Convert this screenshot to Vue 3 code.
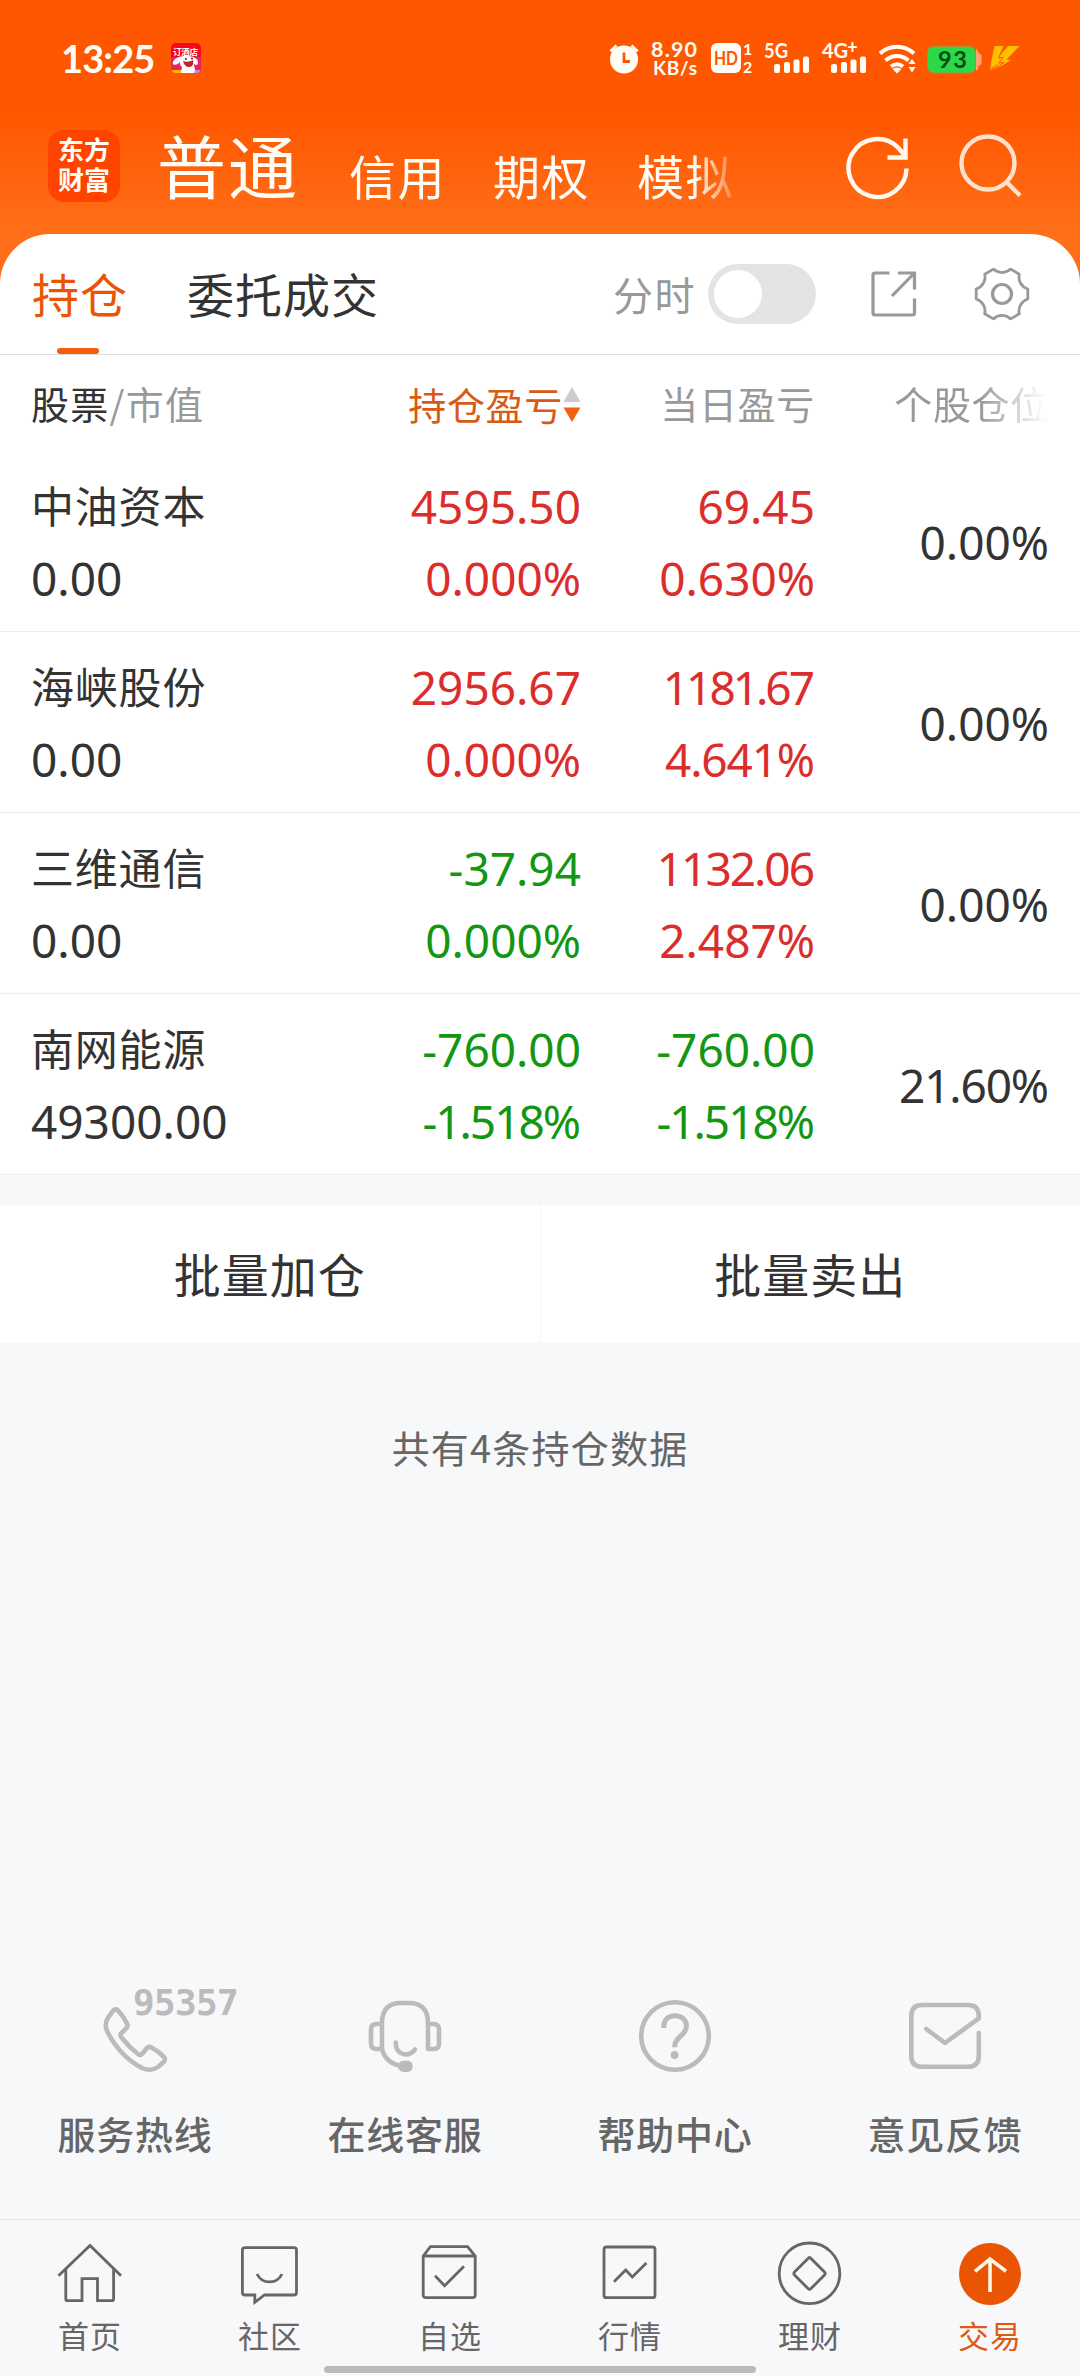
<template>
  <div class="page">
    <header class="top">
      <div class="status-bar">
        <span class="time">13:25</span>
        <svg class="notice" width="30" height="30" viewBox="0 0 30 30">
          <rect width="30" height="30" rx="5" fill="#f5061c" />
          <path d="M0 14h30v11a5 5 0 0 1-5 5H5a5 5 0 0 1-5-5z" fill="#e8265c" />
          <text x="2" y="12" font-size="8.500" font-weight="700" fill="#fff" textLength="25">订酒店</text>
          <path d="M8 14c4-1.500 13-1.500 16 1 3 1 4 5 2 7-2 0-3-1-3-2 0 4 1 6 2 10H10c0-3 1-4 1-6-2-1-2-3-2-5-2 2-5 4-7 2-1-3 3-6 6-7z" fill="#fff" />
          <path d="M12 18c3 1 7 1 10-1 1 5-1 7-4 7s-5-2-6-6z" fill="#c5202c" />
          <circle cx="15" cy="16" r="1" fill="#333" />
          <circle cx="21" cy="15.500" r="1" fill="#333" />
          <path d="M1 27h9v3H4c-2 0-3-1-3-3z" fill="#ffb400" />
          <path d="M24 27h5c0 2-1 3-3 3h-3z" fill="#c08be8" />
        </svg>
        <svg class="status-icons" width="430" height="56" viewBox="0 0 430 56">
          <g fill="#fffdf5" stroke="none">
            <circle cx="24" cy="29.500" r="14" />
            <path d="M10.500 21.500l6-6M37.500 21.500l-6-6" stroke="#fffdf5" stroke-width="3" />
            <path d="M24 22.500v9h6" fill="none" stroke="#ff5700" stroke-width="2.800" />
            <text font-weight="700"><tspan x="51" y="27" font-size="21.500" textLength="46">8.90</tspan><tspan x="53" y="45" font-size="19" textLength="44">KB/s</tspan></text>
            <rect x="111" y="13" width="30" height="30" rx="6" />
            <text x="114" y="35" font-size="19" font-weight="700" fill="#ff5700" textLength="24" lengthAdjust="spacingAndGlyphs">HD</text>
            <text font-size="16" font-weight="700"><tspan x="143" y="25">1</tspan><tspan x="143" y="42.500">2</tspan></text>
            <text x="164" y="28" font-size="20" font-weight="700" textLength="24" lengthAdjust="spacingAndGlyphs">5G</text>
            <text x="222" y="28" font-size="20" font-weight="700">4G<tspan dx="-1" dy="-4" font-size="18">+</tspan></text>
            <g v-for="x in [174, 231]" :key="x">
              <rect :x="x" y="34" width="6" height="9" rx="2" />
              <rect :x="x + 10" y="32" width="6" height="11" rx="2" />
              <rect :x="x + 19.5" y="29.500" width="6" height="13.500" rx="2" />
              <rect :x="x + 29" y="26.500" width="6" height="16.500" rx="2" />
            </g>
            <g fill="none" stroke="#fffdf5" stroke-width="4">
              <path d="M280 23.500c10-9 24-9 34 0" />
              <path d="M285.500 30.500c7-6 16-6 23 0" />
              <path d="M291 36.500c4-3 8-3 12 0" />
            </g>
            <path d="M292.500 39c3-2 6-2 9 0l-4.500 4.500zM308.500 34l3.500-5 3.500 5zM308.500 37l3.500 5.500 3.500-5.500z" />
          </g>
          <rect x="327.500" y="16.500" width="48" height="26.500" rx="6" fill="#2bd84a" stroke="#b58a35" />
          <path d="M376 19c2 1 2.500 3 2.500 4.500 3 0 3 2 3 3v6c0 1 0 3-3 3 0 2-.5 4-2.500 5.500z" fill="#ffa070" />
          <text x="338" y="38" font-size="23.500" font-weight="700" fill="#064d12" textLength="29">93</text>
          <path d="M394.500 16h9l-5 11 9.500-11h11.500l-13 13.500 4.500.5-8 5-12 5.500 10-9.500-9 7-2 2 1.500-10z" fill="#ffbe00" />
          <path d="M405 16l-6.500 12 4.500-.5-4 5.500 5-.5-12 7.500" fill="none" stroke="#ff5700" />
        </svg>
      </div>
      <div class="nav">
        <div class="logo">东方财富</div>
        <span class="nav-current">普通</span>
        <div class="nav-list">
          <span v-for="n in navs" :key="n">{{ n }}</span>
        </div>
        <svg class="refresh" width="64" height="66" viewBox="0 0 64 66" fill="none" stroke="#fff8ee" stroke-width="4.400">
          <path d="M60.500 34.500a29 29 0 1 1-8.500-21l7 8" />
          <path d="M59.500 4.500v19h-18" />
        </svg>
        <svg class="search" width="66" height="66" viewBox="0 0 66 66" fill="none" stroke="#ffe2cb" stroke-width="4.400">
          <circle cx="30" cy="31" r="26.500" />
          <path d="M48 49.500l14 14" />
        </svg>
      </div>
    </header>

    <main class="sheet">
      <div class="tabs">
        <span class="tab active">持仓</span>
        <span class="tab">委托成交</span>
        <span class="switch-label">分时</span>
        <span class="switch" @click="minute = !minute"><i :class="{ on: minute }"></i></span>
        <svg class="share" width="46" height="46" viewBox="0 0 46 46" fill="none" stroke="#999" stroke-width="3.200">
          <path d="M18.500 2H4Q2 2 2 4v38q0 2 2 2h37.500q2 0 2-2V27.500M27 2h16.500v16.500M43 2.500L21 25" />
        </svg>
        <svg class="gear" width="56" height="56" viewBox="-28 -28 56 56" fill="none" stroke="#999" stroke-width="2.800" stroke-linejoin="round">
          <path d="M25.800 5A12.500 12.500 0 0 0 17.300 19.800L8.600 24.900A12.500 12.500 0 0 0-8.600 24.900L-17.300 19.800A12.500 12.500 0 0 0-25.800 5V-5A12.500 12.500 0 0 0-17.300-19.800L-8.600-24.900A12.500 12.500 0 0 0 8.600-24.900L17.300-19.800A12.500 12.500 0 0 0 25.800-5Z" />
          <circle r="9.500" stroke-width="3.200" />
        </svg>
      </div>

      <div class="row head">
        <span class="col-name"><b>股票</b>/市值</span>
        <span class="sorted">持仓盈亏<svg width="18" height="36" viewBox="0 0 18 36">
          <path d="M9 0l8.500 15H.5z" fill="#ccc" />
          <path d="M9 35l8.500-14.500H.5z" fill="#f4600f" />
        </svg></span>
        <span>当日盈亏</span>
        <span class="fading">个股仓位</span>
      </div>

      <div v-for="s in stocks" :key="s.name" class="row stock">
        <div class="col-name">
          <p class="name">{{ s.name }}</p>
          <p>{{ s.value }}</p>
        </div>
        <div :class="s.total[0].startsWith('-') ? 'down' : 'up'">
          <p v-for="t in s.total" :key="t" :style="tracking(t)">{{ t }}</p>
        </div>
        <div :class="s.today[0].startsWith('-') ? 'down' : 'up'">
          <p v-for="t in s.today" :key="t" :style="tracking(t)">{{ t }}</p>
        </div>
        <p class="ratio" :style="tracking(s.ratio)">{{ s.ratio }}</p>
      </div>
    </main>

    <div class="batch">
      <button>批量加仓</button>
      <button>批量卖出</button>
    </div>

    <p class="summary">共有{{ stocks.length }}条持仓数据</p>

    <section class="services">
      <div class="service">
        <svg width="270" height="100" viewBox="0 0 270 100">
          <path d="M112.500 31.500Q115.500 27.500 118.500 31Q123.500 36.500 127 43.500Q128.500 46 126 48.500L121.500 53Q119.500 55 121.500 57.500Q129 67 138 74Q140.500 76 142.500 73.500L147 68Q149 66 151.500 67.500Q158 71 163.500 76.500Q166.500 79 163.500 82L158 87Q151 92 142 88C125 79 114 65 107 51Q104 43 108.500 37Z" />
          <text x="133" y="35">95357</text>
        </svg>
        <span>服务热线</span>
      </div>
      <div class="service">
        <svg width="270" height="100" viewBox="0 0 270 100">
          <path d="M129 85.500C118 83 112 74 112 67V43Q112 23 131 23H139Q158 23 158 43V69H163.500Q169 69 169 63.500V49.500Q169 44 163.500 44H158M112 44H106.500Q101 44 101 49.500V63.500Q101 69 106.500 69H112" />
          <path d="M125.700 62.500C125.700 75 138 78 145 69.500" />
          <rect x="128.400" y="80.700" width="14.200" height="11.300" rx="5" class="solid" />
        </svg>
        <span>在线客服</span>
      </div>
      <div class="service">
        <svg width="270" height="100" viewBox="0 0 270 100">
          <circle cx="135" cy="56" r="33.800" />
          <path d="M123.700 48V47C123.700 39 129 35.700 135.300 35.700S146.500 40 146.500 46C146.500 56 134.600 56 134.600 67.300" class="butt" />
          <circle cx="134.600" cy="75" r="3.900" class="solid" />
        </svg>
        <span>帮助中心</span>
      </div>
      <div class="service">
        <svg width="270" height="100" viewBox="0 0 270 100">
          <path d="M168.800 53V76Q168.800 86.800 158 86.800H112.300Q101.300 86.800 101.300 76V36Q101.300 25 112.300 25H158Q168.800 25 168.800 36V38.300L135 63L116.300 49" />
        </svg>
        <span>意见反馈</span>
      </div>
    </section>

    <nav class="tabbar">
      <div v-for="t in tabs" :key="t.label" class="tab-item" :class="{ current: t.current }">
        <svg width="180" height="76" viewBox="0 0 180 76">
          <circle v-if="t.current" cx="90" cy="38" r="31" class="disc" />
          <circle v-if="t.ring" cx="89.500" cy="37.300" r="30.300" />
          <path :d="t.icon" />
        </svg>
        <span>{{ t.label }}</span>
      </div>
      <i class="home-bar"></i>
    </nav>
  </div>
</template>

<script setup>
import { ref } from 'vue'

const minute = ref(false)

const navs = ['信用', '期权', '模拟']

const stocks = [
  { name: '中油资本', value: '0.00', total: ['4595.50', '0.000%'], today: ['69.45', '0.630%'], ratio: '0.00%' },
  { name: '海峡股份', value: '0.00', total: ['2956.67', '0.000%'], today: ['1181.67', '4.641%'], ratio: '0.00%' },
  { name: '三维通信', value: '0.00', total: ['-37.94', '0.000%'], today: ['1132.06', '2.487%'], ratio: '0.00%' },
  { name: '南网能源', value: '49300.00', total: ['-760.00', '-1.518%'], today: ['-760.00', '-1.518%'], ratio: '21.60%' }
]

const tabs = [
  { label: '首页', icon: 'M58.500 39.700L90 9.500L121 39.700M65.800 33V63Q65.800 64.700 67.500 64.700H82V42.700H97.500V64.700H112Q113.600 64.700 113.600 63V33' },
  { label: '社区', icon: 'M65 11.700H114Q116.500 11.700 116.500 14.200V56.500Q116.500 59 114 59H84.500L74.800 66.300V59H65Q62.400 59 62.400 56.500V14.200Q62.400 11.700 65 11.700ZM77 38C82 48.500 97 48.500 102 38' },
  { label: '自选', icon: 'M63.200 20L70.400 10.700H107.600L115.200 20V59Q115.200 61.700 112.500 61.700H66Q63.200 61.700 63.200 59ZM63.200 20H115.200M75 39.700L84.600 49.700L104 30.300' },
  { label: '行情', icon: 'M66.500 11H112.500Q115 11 115 13.500V59.200Q115 61.700 112.500 61.700H66.500Q64 61.700 64 59.200V13.500Q64 11 66.500 11ZM74 45.700L85.700 34L92.300 41L106.400 27' },
  { label: '理财', ring: true, icon: 'M88 22.500Q89.500 20.500 91 22.500L104.500 36Q106 37.500 104.500 39L91 52.500Q89.500 54 88 52.500L74.500 39Q73 37.500 74.500 36Z' },
  { label: '交易', current: true, icon: 'M75 35.300L90 23L106 35.300M90 22V56' }
]

// the digit 1 is narrower than the rest, so numbers holding it are set tighter
const tracking = (text) => {
  const ones = text.split('1').length - 1
  const gap = (ones * 7) / text.length
  return { letterSpacing: `${-gap}px`, marginRight: `${gap}px` }
}
</script>

<style>
body {
  margin: 0;
}
</style>

<style scoped>
.page {
  width: 1080px;
  height: 2376px;
  display: flex;
  flex-direction: column;
  background: #f7f8fa;
  color: #333;
  font-family: "Noto Sans CJK SC", sans-serif;
  overflow: hidden;
}

p {
  margin: 0;
}

svg {
  display: block;
  flex: none;
}

.top {
  height: 284px;
  margin-bottom: -50px;
  background: linear-gradient(#ff5700 115px, #ff6f1a 234px);
  color: #fffdf5;
}

.status-bar {
  height: 86px;
  padding: 30px 50px 0 61px;
  box-sizing: border-box;
  display: flex;
  align-items: center;
  font-family: "Noto Sans", "Noto Sans CJK SC", sans-serif;
}

.time {
  width: 110px;
  font-family: Lato, sans-serif;
  font-size: 38px;
  font-weight: 700;
  letter-spacing: -0.9px;
}

.status-icons {
  margin-left: auto;
  font-family: Lato, sans-serif;
}

.nav {
  height: 148px;
  padding: 44px 56px 0 48px;
  box-sizing: border-box;
  display: flex;
  align-items: flex-start;
}

.logo {
  width: 72px;
  height: 72px;
  padding: 4px 9px 0 10px;
  box-sizing: border-box;
  border-radius: 16px;
  background: #ff4300;
  font-size: 26px;
  line-height: 30px;
  font-weight: 700;
  word-break: break-all;
}

.nav-current {
  margin: -9px 0 0 37px;
  font-size: 69px;
  line-height: 86px;
  letter-spacing: 2px;
}

.nav-list {
  margin: 15px 0 0 50px;
  display: flex;
  gap: 47px;
  font-size: 47px;
  line-height: 60px;
  letter-spacing: 1.5px;
  -webkit-mask-image: linear-gradient(90deg, #000 345px, transparent 395px);
  mask-image: linear-gradient(90deg, #000 345px, transparent 395px);
}

.refresh {
  margin: 4px 0 0 auto;
}

.search {
  margin: 2px 0 0 48px;
}

.sheet {
  background: #fff;
  border-radius: 50px 50px 0 0;
}

.tabs {
  height: 121px;
  padding: 0 50px 0 32px;
  box-sizing: border-box;
  border-bottom: 1px solid #ddd;
  display: flex;
  align-items: center;
}

.tab {
  height: 120px;
  margin-right: 59px;
  position: relative;
  font-size: 47px;
  line-height: 118px;
  letter-spacing: 1px;
}

.tab.active {
  color: #ea5504;
}

.tab.active::after {
  content: "";
  position: absolute;
  left: 25px;
  bottom: 0;
  width: 42px;
  height: 6px;
  border-radius: 3px;
  background: #f45d0c;
}

.switch-label {
  margin-left: auto;
  font-size: 40px;
  letter-spacing: 1.5px;
  color: #999;
}

.switch {
  width: 108px;
  height: 60px;
  margin: 0 55px 0 12px;
  padding: 6px;
  box-sizing: border-box;
  border-radius: 30px;
  background: #e4e4e6;
}

.switch i {
  display: block;
  width: 48px;
  height: 48px;
  border-radius: 50%;
  background: #fff;
}

.switch i.on {
  margin-left: auto;
}

.gear {
  margin-left: 57px;
}

.row {
  padding: 0 31px;
  display: grid;
  grid-template-columns: 1fr 250px 234px 234px;
  text-align: right;
}

.col-name {
  text-align: left;
}

.head {
  height: 96px;
  font-size: 38px;
  line-height: 95px;
  letter-spacing: 0.7px;
  color: #999;
}

.head .col-name {
  letter-spacing: 1.3px;
}

.head b {
  font-weight: 400;
  color: #333;
}

.sorted {
  display: flex;
  align-items: center;
  justify-content: flex-end;
  color: #d85a14;
}

.sorted svg {
  margin-top: 4px;
}

.fading {
  -webkit-mask-image: linear-gradient(90deg, #000 165px, rgba(0, 0, 0, 0.08) 225px);
  mask-image: linear-gradient(90deg, #000 165px, rgba(0, 0, 0, 0.08) 225px);
}

.stock {
  height: 181px;
  padding-top: 19px;
  box-sizing: border-box;
  border-bottom: 1px solid #eee;
  font-family: "Noto Sans", "Noto Sans CJK SC", sans-serif;
  font-size: 46px;
  line-height: 72px;
}

.stock .name {
  margin: -2px 0 2px;
  font-family: "Noto Sans CJK SC", sans-serif;
  font-size: 43px;
  letter-spacing: 0.8px;
}

.ratio {
  padding-top: 36px;
}

.up {
  color: #dc2d2d;
}

.down {
  color: #139613;
}

.batch {
  height: 138px;
  margin-top: 30px;
  display: flex;
  background: #fff;
}

.batch button {
  flex: 1;
  padding: 0 0 4px;
  border: none;
  background: none;
  color: #333;
  font-family: inherit;
  font-size: 47px;
  letter-spacing: 1px;
}

.batch button + button {
  border-left: 1px solid #f3f4f6;
}

.summary {
  margin-top: 76px;
  text-align: center;
  font-size: 38px;
  line-height: 56px;
  letter-spacing: 1.2px;
  color: #666;
}

.services {
  margin-top: auto;
  height: 239px;
  display: flex;
}

.service {
  width: 270px;
  text-align: center;
  font-size: 38px;
  font-weight: 500;
  line-height: 56px;
  letter-spacing: 0.8px;
  color: #666;
}

.service svg {
  margin-bottom: 25px;
  fill: none;
  stroke: #bbb;
  stroke-width: 4.6;
  stroke-linecap: round;
  stroke-linejoin: round;
}

.service .butt {
  stroke-linecap: butt;
  stroke-width: 5;
}

.service .solid,
.service text {
  fill: #bbb;
  stroke: none;
}

.service text {
  font-family: "DejaVu Sans Mono", monospace;
  font-size: 36px;
  font-weight: 700;
  letter-spacing: -0.7px;
}

.tabbar {
  height: 157px;
  padding-top: 16px;
  box-sizing: border-box;
  border-top: 1px solid #e2e4e6;
  background: #f8f8fb;
  display: flex;
  position: relative;
}

.tab-item {
  width: 180px;
  text-align: center;
  font-size: 31px;
  line-height: 46px;
  letter-spacing: 1px;
  color: #666;
}

.tab-item svg {
  fill: none;
  stroke: #666;
  stroke-width: 2.8;
}

.tab-item.current {
  color: #dd5a14;
}

.tab-item.current svg {
  stroke: #fff5e4;
  stroke-width: 3.6;
}

.tab-item .disc {
  fill: #ea5504;
  stroke: none;
}

.home-bar {
  position: absolute;
  left: 324px;
  bottom: 3px;
  width: 432px;
  height: 7px;
  border-radius: 4px;
  background: #bbb;
}
</style>
